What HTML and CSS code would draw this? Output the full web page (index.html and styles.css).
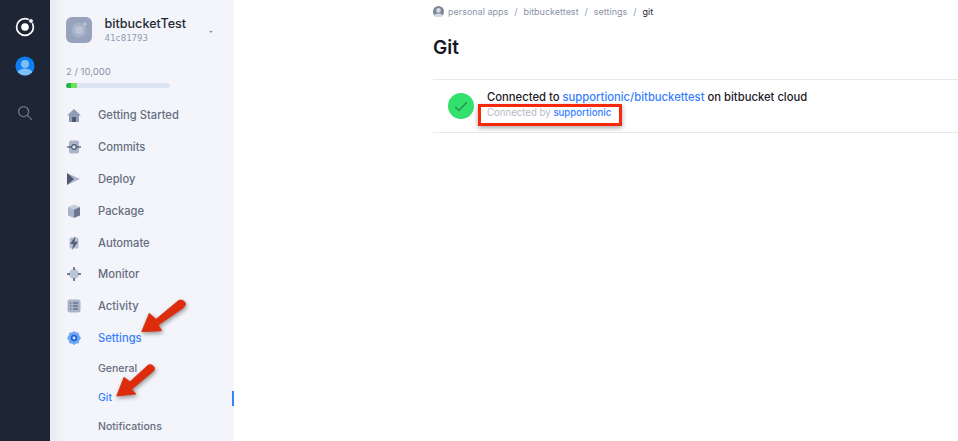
FILE: index.html
```html
<!doctype html>
<html>
<head>
<meta charset="utf-8">
<title>Git</title>
<link rel="stylesheet" href="styles.css">
</head>
<body>

<div class="rail">
  <svg class="rail-logo" width="20" height="20" viewBox="0 0 20 20">
    <circle cx="10" cy="10" r="8.4" fill="none" stroke="#fff" stroke-width="1.7"/>
    <circle cx="10" cy="10" r="3.8" fill="#fff"/>
    <circle cx="16" cy="4" r="2.3" fill="#fff" stroke="#1e2534" stroke-width="0.8"/>
  </svg>
  <svg class="rail-user" width="20" height="20" viewBox="0 0 20 20">
    <defs><clipPath id="userclip"><circle cx="10" cy="10" r="9.6"/></clipPath></defs>
    <circle cx="10" cy="10" r="9.6" fill="#0e7ff2"/>
    <g clip-path="url(#userclip)">
      <circle cx="10" cy="8" r="4" fill="#7cc0f5"/>
      <ellipse cx="10" cy="18" rx="8" ry="5.5" fill="#7cc0f5"/>
    </g>
  </svg>
  <svg class="rail-search" width="16" height="16" viewBox="0 0 16 16">
    <circle cx="6.6" cy="6.6" r="5" fill="none" stroke="#6f7685" stroke-width="1.3"/>
    <path d="M10.4 10.4 L14.6 14.6" stroke="#6f7685" stroke-width="1.3" stroke-linecap="round"/>
  </svg>
</div>

<div class="side">
  <div class="app">
    <svg class="app-icon" width="26" height="26" viewBox="0 0 26 26">
      <rect width="26" height="26" rx="6" fill="#97a3bc"/>
      <circle cx="13" cy="13" r="7.5" fill="#a7b2c8"/>
      <circle cx="13" cy="13" r="4" fill="#bcc5d6"/>
      <circle cx="19" cy="7" r="1.7" fill="#bcc5d6"/>
    </svg>
    <div class="app-text">
      <div class="app-name">bitbucketTest</div>
      <div class="app-id">41c81793</div>
    </div>
    <div class="caret"></div>
  </div>

  <div class="usage">
    <div class="usage-label">2 / 10,000</div>
    <div class="usage-bar"><div class="usage-fill"></div></div>
  </div>

  <div class="nav">
    <div class="nav-item">
      <svg width="14" height="14" viewBox="0 0 14 14"><path d="M7 1 L14 7.5 H12 V14 H2 V7.5 H0 Z" fill="#8f9bb3"/><rect x="5.2" y="9" width="3.6" height="5" fill="#4a5368"/></svg>
      <span>Getting Started</span>
    </div>
    <div class="nav-item">
      <svg width="14" height="14" viewBox="0 0 14 14"><rect x="2" y="0.5" width="10" height="13" rx="2" fill="#a9b4c9"/><path d="M0 7 H14" stroke="#4a5368" stroke-width="1.2"/><circle cx="7" cy="7" r="2.3" fill="#dfe4ee" stroke="#4a5368" stroke-width="1.2"/></svg>
      <span>Commits</span>
    </div>
    <div class="nav-item">
      <svg width="14" height="14" viewBox="0 0 14 14"><path d="M0 1 L13 7 L0 13 Z" fill="#a9b4c9"/><path d="M0 1 L7 7 L0 13 Z" fill="#4f5a70"/></svg>
      <span>Deploy</span>
    </div>
    <div class="nav-item">
      <svg width="14" height="14" viewBox="0 0 14 14"><path d="M1 3 L7 0.5 L13 3 L7 5.5 Z" fill="#c5cddc"/><path d="M1 3 L7 5.5 V14 L1 11.5 Z" fill="#a9b4c9"/><path d="M13 3 L7 5.5 V14 L13 11.5 Z" fill="#6d7890"/></svg>
      <span>Package</span>
    </div>
    <div class="nav-item">
      <svg width="14" height="14" viewBox="0 0 14 14"><rect x="2.5" y="1.5" width="9" height="11" rx="1.5" fill="#b4bed0"/><path d="M8.5 0 L3 8 H6.3 L5 14 L11 5.8 H7.5 Z" fill="#566178"/></svg>
      <span>Automate</span>
    </div>
    <div class="nav-item">
      <svg width="14" height="14" viewBox="0 0 14 14"><circle cx="7" cy="7" r="5" fill="#bcc5d6"/><path d="M7 0 V3 M7 11 V14 M0 7 H3 M11 7 H14" stroke="#4f5a70" stroke-width="1.5"/></svg>
      <span>Monitor</span>
    </div>
    <div class="nav-item">
      <svg width="14" height="14" viewBox="0 0 14 14"><rect width="13" height="13" y="0.5" x="0.5" rx="2.5" fill="#a9b4c9"/><path d="M3 4 H4.2 M6 4 H11 M3 7 H4.2 M6 7 H11 M3 10 H4.2 M6 10 H11" stroke="#4a5368" stroke-width="1.1"/></svg>
      <span>Activity</span>
    </div>
    <div class="nav-item active">
      <svg width="14" height="14" viewBox="0 0 14 14"><path d="M7 0 L9 1.6 L11.6 1.4 L12 4 L14 7 L12 10 L11.6 12.6 L9 12.4 L7 14 L5 12.4 L2.4 12.6 L2 10 L0 7 L2 4 L2.4 1.4 L5 1.6 Z" fill="#6da6f5"/><circle cx="7" cy="7" r="3.2" fill="#1f62d8"/><circle cx="7" cy="7" r="1.4" fill="#dce9fb"/></svg>
      <span>Settings</span>
    </div>
    <div class="sub-item">General</div>
    <div class="sub-item active">Git</div>
    <div class="sub-item">Notifications</div>
  </div>
</div>

<div class="main">
  <div class="crumbs">
    <svg width="11" height="11" viewBox="0 0 11 11">
      <circle cx="5.5" cy="5.5" r="5.5" fill="#7f8797"/>
      <circle cx="5.5" cy="4.4" r="2.3" fill="#d5d9e0"/>
      <ellipse cx="5.5" cy="9.6" rx="3.8" ry="2.2" fill="#d5d9e0"/>
    </svg>
    <span>personal apps</span><i>/</i><span>bitbuckettest</span><i>/</i><span>settings</span><i>/</i><b>git</b>
  </div>
  <h1>Git</h1>
  <div class="status">
    <div class="check">
      <svg width="14" height="11" viewBox="0 0 14 11"><path d="M1.2 5.8 L5 9.4 L12.8 1.2" fill="none" stroke="#1f8a52" stroke-width="1.3"/></svg>
    </div>
    <div class="status-text">
      <div class="status-line">Connected to <a>supportionic/bitbuckettest</a> on bitbucket cloud</div>
      <div class="status-by">Connected by <a>supportionic</a></div>
    </div>
  </div>
</div>

<!-- annotations on top of the screenshot -->
<div class="redbox"></div>
<svg class="arrow arrow-one" width="48" height="38" viewBox="0 0 48 38">
  <path d="M0.7 33.7 L8.3 15.3 L15 21.3 L37.3 2.7 C41 0.5 46 4.5 44 7.5 C43.5 8.5 43 9 42 10 L17.3 27 L20.7 32.7 Z" fill="#dd2c0c" stroke="#dd2c0c" stroke-width="0.8" stroke-linejoin="round"/>
</svg>
<svg class="arrow arrow-two" width="42" height="36" viewBox="0 0 42 36">
  <path d="M0.7 32 L8 13.3 L14 17.7 L32.3 1 C35.5 -0.5 40 3 38 6.3 C37.5 7 37 7.5 36 8.3 L15.7 25.3 L20 30 Z" fill="#dd2c0c" stroke="#dd2c0c" stroke-width="0.8" stroke-linejoin="round"/>
</svg>

</body>
</html>
```

FILE: styles.css
```css
html, body {
	margin: 0;
	height: 441px;
	overflow: hidden;
}

body {
	display: flex;
	background: #fff;
	font-family: Inter, "Liberation Sans", sans-serif;
	color: #16191f;
}

.rail {
	width: 50px;
	flex: none;
	background: #1e2534;
	display: flex;
	flex-direction: column;
	align-items: center;
}

.rail-logo { margin-top: 17px; }
.rail-user { margin-top: 19px; }
.rail-search { margin-top: 29px; }

.side {
	width: 184px;
	flex: none;
	box-sizing: border-box;
	padding-left: 16px;
	background: linear-gradient(to right, #e9ebf0, #f3f5fa 16px);
}

.app {
	display: flex;
	align-items: center;
	margin-top: 17px;
	height: 26px;
}

.app-text { margin-left: 12.5px; }

.app-name {
	font-size: 12.6px;
	font-weight: 500;
	line-height: 16px;
	color: #272a33;
}

.app-id {
	font-family: "DejaVu Sans Mono", monospace;
	font-size: 9px;
	line-height: 12px;
	color: #8f9bb3;
}

.caret {
	margin-left: 23px;
	margin-top: 3px;
	border-left: 2px solid transparent;
	border-right: 2px solid transparent;
	border-top: 2px solid #8d95a5;
}

.usage { margin-top: 23px; }

.usage-label {
	font-size: 9.5px;
	line-height: 12px;
	color: #8a93a6;
}

.usage-bar {
	width: 104px;
	height: 5px;
	margin-top: 5px;
	border-radius: 3px;
	background: #dde4f1;
	overflow: hidden;
}

.usage-fill {
	width: 11px;
	height: 5px;
	background: linear-gradient(to right, #20b845 50%, #6ee05c 50%);
}

.nav {
	margin-top: 11px;
}

.nav-item {
	display: flex;
	align-items: center;
	height: 31.9px;
	font-size: 11.2px;
	font-weight: 500;
	color: #656d80;
}

.nav-item svg {
	margin-left: 1px;
	margin-right: 17px;
	flex: none;
}

.nav-item.active { color: #3880ff; }

.sub-item {
	position: relative;
	height: 29px;
	display: flex;
	align-items: center;
	padding-left: 32px;
	font-size: 10.5px;
	font-weight: 500;
	color: #656d80;
}

.sub-item.active { color: #3880ff; }

.sub-item.active::after {
	content: "";
	position: absolute;
	right: 0;
	top: 8px;
	width: 2px;
	height: 15px;
	background: #3880ff;
}

.main {
	flex: 1;
	padding-left: 199px;
}

.crumbs {
	display: flex;
	align-items: center;
	height: 11px;
	margin-top: 6px;
	font-size: 9px;
	color: #8a93a6;
}

.crumbs svg { margin-right: 4px; }
.crumbs i { font-style: normal; margin: 0 6px; }
.crumbs b { font-weight: 400; color: #272a33; }

h1 {
	margin: 21px 0 0;
	font-size: 19px;
	font-weight: 600;
	line-height: 20px;
	color: #14171f;
}

.status {
	display: flex;
	align-items: center;
	margin-top: 21px;
	height: 52px;
	padding-left: 15px;
	border-top: 1px solid #e6e8ef;
	border-bottom: 1px solid #e6e8ef;
}

.check {
	width: 26px;
	height: 26px;
	border-radius: 50%;
	background: #32e06c;
	display: flex;
	align-items: center;
	justify-content: center;
}

.status-text { margin-left: 13px; margin-top: -4px; }

.status-line {
	font-size: 11.25px;
	font-weight: 500;
	line-height: 16px;
	color: #1d2028;
}

.status-line a, .status-by a { color: #3880ff; }

.status-by {
	font-size: 9.65px;
	line-height: 15px;
	color: #b4b9c5;
}

.status-by a { font-weight: 500; }

.redbox {
	position: absolute;
	left: 478px;
	top: 104px;
	width: 138px;
	height: 16px;
	border: 3px solid #f8280c;
	box-shadow: 0 2px 5px rgba(0, 0, 0, 0.35);
}

.arrow {
	position: absolute;
	filter: drop-shadow(1px 2px 2px rgba(0, 0, 0, 0.4));
}

.arrow-one { left: 141px; top: 298px; }
.arrow-two { left: 116px; top: 364px; }
```
